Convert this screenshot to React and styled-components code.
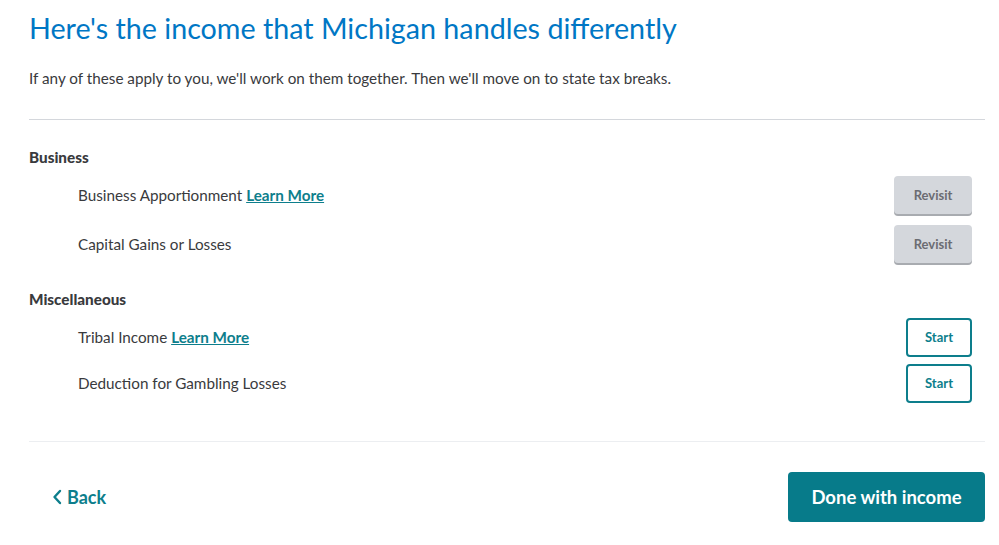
import styled, { createGlobalStyle } from "styled-components"

const GlobalStyle = createGlobalStyle`
  body {
    margin: 0;
    background: #ffffff;
    font-family: Lato, "Noto Sans", sans-serif;
    color: #393a3d;
  }
`

const sections = [
  {
    title: "Business",
    gap: 3,
    items: [
      { label: "Business Apportionment", learn: true, action: "Revisit" },
      { label: "Capital Gains or Losses", learn: false, action: "Revisit" },
    ],
  },
  {
    title: "Miscellaneous",
    gap: 0,
    items: [
      { label: "Tribal Income", learn: true, action: "Start" },
      { label: "Deduction for Gambling Losses", learn: false, action: "Start" },
    ],
  },
]

const App = () => {
  return (
    <Page>
      <GlobalStyle />
      <Title>Here's the income that Michigan handles differently</Title>
      <Intro>If any of these apply to you, we'll work on them together. Then we'll move on to state tax breaks.</Intro>
      <Divider />
      <List>
        {sections.map((section) => (
          <Section key={section.title} $gap={section.gap}>
            <SectionTitle>{section.title}</SectionTitle>
            {section.items.map((item) => (
              <Row key={item.label}>
                <RowLabel>
                  {item.label}
                  {item.learn && <> <LearnLink href="#">Learn More</LearnLink></>}
                </RowLabel>
                <ActionButton $variant={item.action === "Revisit" ? "revisit" : "start"}>
                  {item.action}
                </ActionButton>
              </Row>
            ))}
          </Section>
        ))}
      </List>
      <Divider $light />
      <Footer>
        <BackLink href="#">
          <svg width="10" height="16" viewBox="0 0 10 16" fill="none">
            <path d="M8 2 L2.5 8 L8 14" stroke="#0d7e8c" strokeWidth="2.4" strokeLinecap="round" strokeLinejoin="round" />
          </svg>
          Back
        </BackLink>
        <DoneButton>Done with income</DoneButton>
      </Footer>
    </Page>
  )
}

const Page = styled.div`
  width: 999px;
  height: 545px;
  box-sizing: border-box;
  padding: 10px 14px 0 29px;
  display: flex;
  flex-direction: column;
`

const Title = styled.h1`
  margin: 0;
  font-size: 28.7px;
  font-weight: 400;
  line-height: 36px;
  color: #0077c5;
`

const Intro = styled.p`
  margin: 22px 0 0;
  font-size: 15.25px;
  line-height: 20px;
  color: #393a3d;
`

const Divider = styled.hr`
  margin: ${(p) => (p.$light ? "0" : "31px 0 0")};
  border: none;
  border-top: 1px solid ${(p) => (p.$light ? "#eceef1" : "#d4d7dc")};
  width: 956px;
`

const List = styled.div`
  padding: 27px 0 35px;
  display: flex;
  flex-direction: column;
  gap: 22px;
`

const Section = styled.div`
  display: flex;
  flex-direction: column;
  & > div + div {
    margin-top: ${(p) => p.$gap}px;
  }
`

const SectionTitle = styled.h2`
  margin: 0 0 5px;
  font-size: 15.25px;
  font-weight: 900;
  line-height: 20px;
  color: #393a3d;
`

const Row = styled.div`
  display: flex;
  align-items: center;
  justify-content: space-between;
  width: 943px;
  padding-left: 49px;
  box-sizing: border-box;
  height: 46px;
`

const RowLabel = styled.span`
  font-size: 15.25px;
  color: #393a3d;
`

const LearnLink = styled.a`
  color: #0d7e8c;
  font-weight: 700;
  text-decoration: underline;
`

const ActionButton = styled.button`
  box-sizing: border-box;
  border-radius: 4px;
  font-family: Lato, "Noto Sans", sans-serif;
  font-size: 13px;
  font-weight: 700;
  cursor: pointer;
  ${(p) =>
    p.$variant === "revisit"
      ? `
    width: 78px;
    height: 38px;
    background: #d4d7dc;
    color: #6b6c72;
    border: none;
    box-shadow: 0 2px 0 #a8abb0;
  `
      : `
    width: 66px;
    height: 39px;
    background: #ffffff;
    color: #0d7e8c;
    border: 2px solid #0d7e8c;
  `}
`

const Footer = styled.div`
  display: flex;
  align-items: center;
  justify-content: space-between;
  padding: 30px 0 0 23px;
`

const BackLink = styled.a`
  display: flex;
  align-items: center;
  gap: 5px;
  font-size: 18px;
  font-weight: 700;
  color: #0d7e8c;
  text-decoration: none;
`

const DoneButton = styled.button`
  width: 197px;
  height: 50px;
  border: none;
  border-radius: 4px;
  background: #077b8a;
  color: #ffffff;
  font-family: Lato, "Noto Sans", sans-serif;
  font-size: 18.5px;
  font-weight: 700;
  cursor: pointer;
`

export default App
